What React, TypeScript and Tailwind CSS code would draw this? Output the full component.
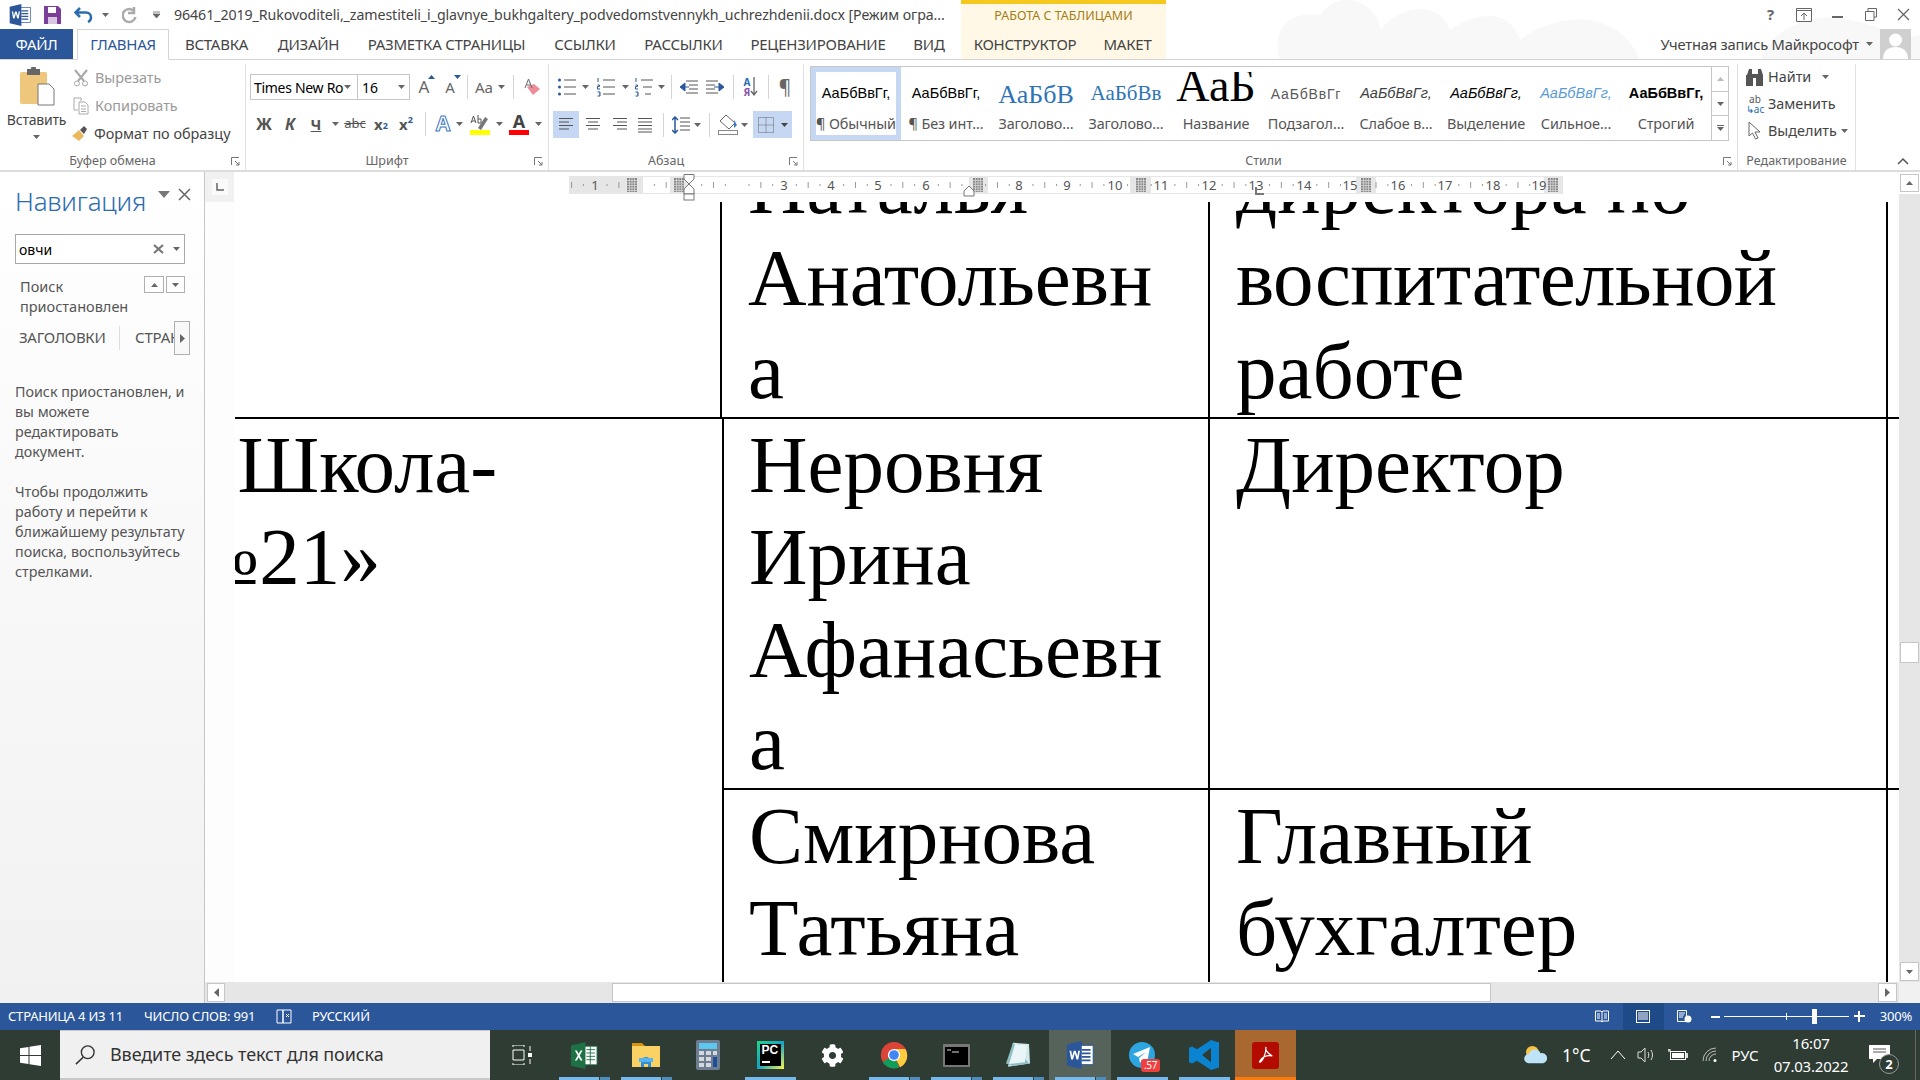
import React from "react";
import { FaCog } from "react-icons/fa";

const Caret = ({ c = "#666", up = false }: { c?: string; up?: boolean }) => (
  <svg width="7" height="4" viewBox="0 0 7 4" className="shrink-0"><path d={up ? "M3.5 0L7 4H0z" : "M0 0h7L3.5 4z"} fill={c} /></svg>
);
const Sep = () => <div className="w-px h-[24px] bg-[#d4d4d4]" />;
const S = ({ className = "", children }: { className?: string; children?: React.ReactNode }) => (
  <div className={"flex items-center justify-center shrink-0 h-full " + className}>{children}</div>
);

const Lines = ({ kind }: { kind: "l" | "c" | "r" | "j" }) => {
  const d = {
    l: "M1 1.5h14M1 5h10M1 8.5h14M1 12h10",
    c: "M1 1.5h14M3 5h10M1 8.5h14M3 12h10",
    r: "M1 1.5h14M5 5h10M1 8.5h14M5 12h10",
    j: "M1 1.5h14M1 5h14M1 8.5h14M1 12h14M1 15h14",
  }[kind];
  return <svg width="16" height="16" viewBox="0 0 16 16"><path d={d} stroke="#555" strokeWidth="1" fill="none" /></svg>;
};
const ListIcon = ({ n }: { n: "b" | "n" | "m" }) => (
  <svg width="20" height="20" viewBox="0 0 20 20">
    {n === "b" && <g fill="#2b579a"><circle cx="2.5" cy="3" r="1.5" /><circle cx="2.5" cy="10" r="1.5" /><circle cx="2.5" cy="17" r="1.5" /></g>}
    {n !== "b" && <path d="M2 1v4M1.5 8h2v1.5h-2V12h2.5M1.5 15h2.5v4H1.5M3 17h1" stroke="#2b579a" strokeWidth="1" fill="none" />}
    <path d={n === "m" ? "M7 3h12M9 10h9M11 17h6" : "M7 3h12M7 10h12M7 17h12"} stroke="#555" strokeWidth="1" />
  </svg>
);

const Word = ({ s = 22 }: { s?: number }) => (
  <svg width={s} height={s} viewBox="0 0 32 32">
    <rect x="12" y="5" width="19" height="22" fill="#fff" stroke="#2b579a" />
    <path d="M18 10h10M18 14h10M18 18h10M18 22h10" stroke="#2b579a" strokeWidth="2" />
    <path d="M1 4l17-4v32L1 28z" fill="#2b579a" />
    <path d="M4 11l2 10h2l2-7 2 7h2l2-10h-2l-1 6-2-6h-2l-2 6-1-6z" fill="#fff" />
  </svg>
);

const Styles: { label: string; prev: string; cls: string; sel?: boolean }[] = [
  { label: "¶ Обычный", prev: "АаБбВвГг,", cls: "font-['Liberation_Sans',sans-serif] text-[14.500px] text-black", sel: true },
  { label: "¶ Без инт...", prev: "АаБбВвГг,", cls: "font-['Liberation_Sans',sans-serif] text-[14.500px] text-black" },
  { label: "Заголово...", prev: "АаБбВ", cls: "font-['Liberation_Serif',serif] text-[26px] text-[#2e74b5]" },
  { label: "Заголово...", prev: "АаБбВв", cls: "font-['Liberation_Serif',serif] text-[21px] text-[#2e74b5]" },
  { label: "Название", prev: "АаБ", cls: "font-['Liberation_Serif',serif] text-[46px] text-black leading-[46px] -translate-y-[8px]" },
  { label: "Подзагол...", prev: "АаБбВвГг", cls: "font-['Liberation_Sans',sans-serif] text-[14px] tracking-[0.8px] text-[#5a5a5a]" },
  { label: "Слабое в...", prev: "АаБбВвГг,", cls: "font-['Liberation_Sans',sans-serif] italic text-[14.500px] text-[#404040]" },
  { label: "Выделение", prev: "АаБбВвГг,", cls: "font-['Liberation_Sans',sans-serif] italic text-[14.500px] text-black" },
  { label: "Сильное...", prev: "АаБбВвГг,", cls: "font-['Liberation_Sans',sans-serif] italic text-[14.500px] text-[#5b9bd5]" },
  { label: "Строгий", prev: "АаБбВвГг,", cls: "font-['Liberation_Sans',sans-serif] font-bold text-[14.500px] text-black" },
];

const GroupLabel = ({ children, launcher = true }: { children: React.ReactNode; launcher?: boolean }) => (
  <div className={"h-[20px] shrink-0 flex items-center justify-center relative text-[12.5px] text-[#666] translate-y-[1px] " + (launcher ? "pr-[20px]" : "")}>
    {children}
    {launcher && (
      <svg width="9" height="9" viewBox="0 0 9 9" className="absolute right-[5px] top-[6px]"><path d="M.5 8V.5H8M4 4l4 4M8 5v3H5" stroke="#777" fill="none" /></svg>
    )}
  </div>
);

function TitleBar() {
  return (
    <div className="h-[29px] flex shrink-0 relative z-10">
      <div className="w-[961px] flex items-center shrink-0">
        <S className="w-[38px] pl-[2px]"><Word s={22} /></S>
        <S className="w-[28px]">
          <svg width="17" height="19" viewBox="0 0 17 19"><path d="M0 1h14l3 3v15H0z" fill="#7b3f98" /><rect x="4" y="2" width="8" height="6" fill="#fff" /><rect x="4" y="12" width="9" height="7" fill="#d9c6e2" /></svg>
        </S>
        <S className="w-[36px]">
          <svg width="20" height="16" viewBox="0 0 20 16"><path d="M6 1L1.5 5.5 6 10M2 5.5h10a5 5 0 0 1 5 5c0 2-1 3.500-3 4.500" fill="none" stroke="#2b6cb0" strokeWidth="2.500" /></svg>
        </S>
        <Caret />
        <S className="w-[42px]">
          <svg width="17" height="19" viewBox="0 0 17 19"><path d="M12 2v6h-6M12 6a6.500 6.500 0 1 0 1.500 6" fill="none" stroke="#aaa" strokeWidth="2.500" /></svg>
        </S>
        <S className="w-[10px]"><svg width="7" height="7" viewBox="0 0 7 7"><path d="M0 1h7M0 3h7L3.500 7z" stroke="#666" strokeWidth=".8" fill="#666" /></svg></S>
        <div className="ml-[13px] text-[14.2px] text-[#444] whitespace-nowrap tracking-[-0.08px]">
          96461_2019_Rukovoditeli,_zamestiteli_i_glavnye_bukhgaltery_podvedomstvennykh_uchrezhdenii.docx [Режим огра...
        </div>
      </div>
      <div className="w-[205px] shrink-0 bg-[#fff8e6] border-t-[4px] border-[#f5c81f] flex items-center justify-center text-[12.5px] text-[#a67c14]">
        РАБОТА С ТАБЛИЦАМИ
      </div>
      <div className="flex-1 flex items-center justify-end text-[#666]">
        <S className="w-[33px] text-[15px] font-bold">?</S>
        <S className="w-[33px]">
          <svg width="16" height="14" viewBox="0 0 16 14"><path d="M.5.5h15v13H.5zM1 2.500h14M8 12V5M5 8l3-3 3 3" stroke="#666" fill="none" /></svg>
        </S>
        <S className="w-[34px]"><div className="w-[11px] h-[2px] bg-[#666] mt-[5px]" /></S>
        <S className="w-[33px]">
          <svg width="12" height="13" viewBox="0 0 12 13"><path d="M3 3V.5h8.500V9H9M.5 3.500H9V12.500H.5z" stroke="#666" fill="none" /></svg>
        </S>
        <S className="w-[33px]">
          <svg width="13" height="13" viewBox="0 0 13 13"><path d="M1 1l11 11M12 1L1 12" stroke="#666" strokeWidth="1.300" /></svg>
        </S>
      </div>
    </div>
  );
}

function TabRow() {
  const t = "flex items-center justify-center text-[15px] text-[#444] shrink-0 tracking-[-0.25px]";
  return (
    <div className="h-[31px] flex shrink-0 relative z-10 border-b border-[#d4d4d4]">
      <div className={"w-[73px] bg-[#2b579a] !text-white " + t}>ФАЙЛ</div>
      <div className={"ml-[4px] w-[92px] h-[31px] bg-white border border-[#d4d4d4] border-b-white !text-[#2b579a] " + t}>ГЛАВНАЯ</div>
      <div className={"w-[95px] " + t}>ВСТАВКА</div>
      <div className={"w-[89px] " + t}>ДИЗАЙН</div>
      <div className={"w-[187px] " + t}>РАЗМЕТКА СТРАНИЦЫ</div>
      <div className={"w-[90px] " + t}>ССЫЛКИ</div>
      <div className={"w-[107px] " + t}>РАССЫЛКИ</div>
      <div className={"w-[162px] " + t}>РЕЦЕНЗИРОВАНИЕ</div>
      <div className={"w-[60px] " + t}>ВИД</div>
      <div className="w-[205px] flex bg-[#fff8e6] shrink-0 ml-[2px]">
        <div className={"w-[128px] " + t}>КОНСТРУКТОР</div>
        <div className={"w-[77px] " + t}>МАКЕТ</div>
      </div>
      <div className="flex-1 flex items-center justify-end">
        <span className="text-[14.700px] text-[#444] whitespace-nowrap tracking-[-0.2px]">Учетная запись Майкрософт</span>
        <div className="mx-[7px]"><Caret /></div>
        <div className="w-[31px] h-[30px] bg-[#cfcfcf] mr-[9px] overflow-hidden flex justify-center">
          <svg width="31" height="30" viewBox="0 0 31 30"><circle cx="15.500" cy="11" r="6.500" fill="#fff" /><path d="M3 30c0-8 5-12 12.500-12S28 22 28 30z" fill="#fff" /></svg>
        </div>
      </div>
    </div>
  );
}

function Ribbon() {
  return (
    <div className="h-[112px] flex shrink-0 border-b-2 border-[#dcdcdc] bg-white relative z-10 text-[14.400px] text-[#444]">
      {/* Clipboard */}
      <div className="w-[246px] shrink-0 border-r border-[#e1e1e1] mt-[4px] flex flex-col">
        <div className="flex-1 flex min-h-0">
          <div className="w-[73px] flex flex-col items-center pt-[3px]">
            <svg width="36" height="39" viewBox="0 0 36 39">
              <rect x="1" y="5" width="27" height="32" rx="2" fill="#eec77d" />
              <rect x="8" y="2" width="13" height="6" fill="#666" /><rect x="12" y="0" width="5" height="4" rx="1" fill="#666" />
              <path d="M19 17h11l5 5v16H19z" fill="#fff" stroke="#777" />
            </svg>
            <div className="text-[14px] mt-[3px] tracking-[-0.2px]">Вставить</div>
            <div className="mt-[5px]"><Caret /></div>
          </div>
          <div className="flex flex-col">
            <div className="h-[28px] flex items-center gap-[6px] text-[#9a9a9a]">
              <svg width="16" height="18" viewBox="0 0 16 18"><path d="M2 1l9 11M14 1L5 12" stroke="#a8a8a8" strokeWidth="2" /><circle cx="4" cy="14.500" r="2.500" fill="none" stroke="#a8a8a8" /><circle cx="12" cy="14.500" r="2.500" fill="none" stroke="#a8a8a8" /></svg>
              Вырезать
            </div>
            <div className="h-[28px] flex items-center gap-[6px] text-[#9a9a9a]">
              <svg width="16" height="18" viewBox="0 0 16 18"><path d="M1 1h7v3M1 1v12h4M6 5h6l3 3v9H6zM8 9h5M8 12h5M8 14.500h5" fill="none" stroke="#aaa" /></svg>
              Копировать
            </div>
            <div className="h-[28px] flex items-center gap-[5px] -ml-[1px]">
              <svg width="17" height="16" viewBox="0 0 17 16"><path d="M0 10l7-6 5 6-5 5z" fill="#e9b860" /><path d="M8 4l4-4 3 3-3 5z" fill="#555" /></svg>
              Формат по образцу
            </div>
          </div>
        </div>
        <GroupLabel>Буфер обмена</GroupLabel>
      </div>

      {/* Font */}
      <div className="w-[303px] shrink-0 border-r border-[#e1e1e1] mt-[4px] flex flex-col">
        <div className="h-[34px] mt-[6px] flex items-center">
          <div className="w-[4px] shrink-0" />
          <div className="w-[108px] h-[26px] border border-[#c6c6c6] flex items-center pl-[3px] shrink-0 text-black overflow-hidden">
            <span className="w-[90px] overflow-hidden whitespace-nowrap text-[14px] tracking-[-0.3px]">Times New Roman</span>
            <Caret />
          </div>
          <div className="w-[52px] h-[26px] border border-l-0 border-[#c6c6c6] flex items-center justify-between px-[4px] shrink-0 text-black text-[14px]">16<Caret /></div>
          <S className="w-[28px] text-[17px] text-[#666] relative">A<span className="absolute right-[3px] top-[5px]"><Caret c="#2b579a" up /></span></S>
          <S className="w-[24px] text-[15px] text-[#666] relative">A<span className="absolute right-[1px] top-[5px]"><Caret c="#2b579a" /></span></S>
          <S className="w-[10px]"><Sep /></S>
          <S className="w-[24px] text-[15px] text-[#666]">Aa</S>
          <S className="w-[10px]"><Caret /></S>
          <S className="w-[14px]"><Sep /></S>
          <S className="w-[24px]">
            <svg width="17" height="18" viewBox="0 0 17 18"><path d="M3 9l7-3 6 5-7 6z" fill="#ee8c98" /><path d="M1 10L4.500 1 8 10M2.500 7h4" stroke="#666" fill="none" /></svg>
          </S>
        </div>
        <div className="h-[30px] mt-[5px] flex items-center text-[#555]">
          <S className="w-[5px]" />
          <S className="w-[26px] text-[16px] font-bold">Ж</S>
          <S className="w-[26px] text-[16px] font-bold italic">К</S>
          <S className="w-[26px] text-[15px] font-bold underline">Ч</S>
          <S className="w-[12px]"><Caret /></S>
          <S className="w-[28px] text-[13px] line-through">abc</S>
          <S className="w-[24px] text-[15px] font-bold">x<sub className="text-[9px] text-[#2b579a]">2</sub></S>
          <S className="w-[26px] text-[15px] font-bold">x<sup className="text-[9px] text-[#2b579a]">2</sup></S>
          <S className="w-[12px]"><Sep /></S>
          <S className="w-[24px] text-[21px] font-bold text-white [-webkit-text-stroke:1px_#3a78c3]">A</S>
          <S className="w-[8px]"><Caret /></S>
          <S className="w-[4px]" />
          <S className="w-[26px]">
            <svg width="20" height="21" viewBox="0 0 20 21"><path d="M1 9L3.500 2 6 9M2 7h3M8 1v8M8 5h3v4H8" stroke="#555" fill="none" /><path d="M8 14l7-11 3 2-7 11z" fill="#777" /><rect y="16" width="20" height="5" fill="#ff0" /></svg>
          </S>
          <S className="w-[12px]"><Caret /></S>
          <S className="w-[28px]">
            <div className="flex flex-col items-center leading-none"><span className="text-[18px] font-bold text-[#444] leading-[17px]">A</span><div className="w-[20px] h-[5px] bg-[#ff0000]" /></div>
          </S>
          <S className="w-[10px]"><Caret /></S>
        </div>
        <div className="flex-1" />
        <GroupLabel>Шрифт</GroupLabel>
      </div>

      {/* Paragraph */}
      <div className="w-[255px] shrink-0 border-r border-[#e1e1e1] mt-[4px] flex flex-col">
        <div className="h-[34px] mt-[6px] flex items-center">
          <S className="w-[6px]" />
          <S className="w-[24px]"><ListIcon n="b" /></S>
          <S className="w-[13px]"><Caret /></S>
          <S className="w-[27px]"><ListIcon n="n" /></S>
          <S className="w-[13px]"><Caret /></S>
          <S className="w-[24px]"><ListIcon n="m" /></S>
          <S className="w-[11px]"><Caret /></S>
          <S className="w-[8px]"><Sep /></S>
          <S className="w-[28px]">
            <svg width="18" height="14" viewBox="0 0 18 14"><path d="M6 1h12M9 5h9M9 9h9M6 13h12" stroke="#555" /><path d="M0 7l5-4v8zM4 7h5" fill="#2b579a" stroke="#2b579a" /></svg>
          </S>
          <S className="w-[24px]">
            <svg width="18" height="14" viewBox="0 0 18 14"><path d="M0 1h12M0 5h9M0 9h9M0 13h12" stroke="#555" /><path d="M18 7l-5-4v8zM14 7H8" fill="#2b579a" stroke="#2b579a" /></svg>
          </S>
          <S className="w-[12px]"><Sep /></S>
          <S className="w-[24px]">
            <div className="flex items-center">
              <div className="flex flex-col text-[10px] font-bold leading-[10px]"><span className="text-[#2b6cb0]">А</span><span className="text-[#8a4fa8]">Я</span></div>
              <svg width="8" height="20" viewBox="0 0 8 20"><path d="M4 0v18M1 14l3 4 3-4" stroke="#666" fill="none" strokeWidth="1.300" /></svg>
            </div>
          </S>
          <S className="w-[10px]"><Sep /></S>
          <S className="w-[24px] text-[19px] text-[#666]">¶</S>
        </div>
        <div className="h-[27px] mt-[7px] flex items-center">
          <S className="w-[4px]" />
          <S className="w-[26px] bg-[#c5d7f2]"><Lines kind="l" /></S>
          <S className="w-[27px]"><Lines kind="c" /></S>
          <S className="w-[27px]"><Lines kind="r" /></S>
          <S className="w-[24px]"><Lines kind="j" /></S>
          <S className="w-[12px]"><Sep /></S>
          <S className="w-[24px]">
            <svg width="18" height="18" viewBox="0 0 18 18"><path d="M8 2h10M8 6h10M8 10h10M8 14h10" stroke="#555" /><path d="M3 1v16M0 4l3-3 3 3M0 14l3 3 3-3" stroke="#2b579a" fill="none" strokeWidth="1.500" /></svg>
          </S>
          <S className="w-[9px]"><Caret /></S>
          <S className="w-[14px]"><Sep /></S>
          <S className="w-[23px]">
            <svg width="20" height="21" viewBox="0 0 20 21"><path d="M8 1l9 8-6 6-9-8z" fill="#fff" stroke="#666" /><path d="M16 6l3 5-3 3z" fill="#3a78c3" /><rect x="0.500" y="16.500" width="19" height="4" fill="#fff" stroke="#888" /></svg>
          </S>
          <S className="w-[10px]"><Caret /></S>
          <S className="w-[4px]" />
          <div className="w-[39px] h-full bg-[#c5d7f2] flex items-center justify-center gap-[7px] shrink-0">
            <svg width="16" height="16" viewBox="0 0 16 16"><path d="M.5.5h15v15H.5zM8 .5v15M.5 8h15" fill="none" stroke="#666" strokeDasharray="1 1" /></svg>
            <Caret c="#444" />
          </div>
        </div>
        <div className="flex-1" />
        <GroupLabel>Абзац</GroupLabel>
      </div>

      {/* Styles */}
      <div className="w-[934px] shrink-0 border-r border-[#e1e1e1] mt-[4px] flex flex-col pl-[6px]">
        <div className="w-[919px] h-[75px] mt-[2px] border border-[#c6c6c6] flex">
          {Styles.map((s, i) => (
            <div key={i} className={"w-[90px] shrink-0 flex flex-col items-center overflow-hidden " + (s.sel ? "border-[5px] border-[#c5d7f2] " : "border-[5px] border-transparent ")}>
              <div className="h-[40px] w-full flex items-center justify-center overflow-hidden whitespace-nowrap pt-[4px]">
                <span className={s.cls}>{s.prev}</span>
              </div>
              <div className="text-[14.400px] text-[#555] whitespace-nowrap tracking-[-0.1px] leading-[22px] mt-[1px]">{s.label}</div>
            </div>
          ))}
          <div className="flex-1 flex flex-col border-l border-[#c6c6c6] bg-white">
            <div className="flex-1 flex items-center justify-center border-b border-[#c6c6c6]"><Caret c="#bbb" up /></div>
            <div className="flex-1 flex items-center justify-center border-b border-[#c6c6c6]"><Caret /></div>
            <div className="flex-1 flex flex-col items-center justify-center gap-[1px]"><div className="w-[7px] h-px bg-[#666]" /><Caret /></div>
          </div>
        </div>
        <div className="flex-1" />
        <GroupLabel>Стили</GroupLabel>
      </div>

      {/* Editing */}
      <div className="w-[118px] shrink-0 border-r border-[#e1e1e1] mt-[4px] flex flex-col">
        <div className="pl-[7px]">
          <div className="h-[26px] flex items-center gap-[3px]">
            <svg width="20" height="20" viewBox="0 0 20 20"><path d="M2 8l2-6h3v5h6V2h3l2 6v11h-7V11H8v8H1V8z" fill="#555" /></svg>
            <span>Найти</span><span className="ml-[8px]"><Caret /></span>
          </div>
          <div className="h-[27px] flex items-center gap-[3px]">
            <div className="w-[20px] text-[10px] leading-[10px] text-center"><div className="text-[#555]">ab</div><div className="text-[#2b6cb0]">↳ac</div></div>
            <span>Заменить</span>
          </div>
          <div className="h-[27px] flex items-center gap-[3px]">
            <svg width="20" height="20" viewBox="0 0 20 20" className="shrink-0"><path d="M4 1v14l3.500-3 3 6 2.500-1-3-6h5z" fill="#fff" stroke="#666" /></svg>
            <span>Выделить</span><span className="ml-[1px]"><Caret /></span>
          </div>
        </div>
        <div className="flex-1" />
        <GroupLabel launcher={false}>Редактирование</GroupLabel>
      </div>
      <div className="flex-1 flex items-end justify-end pr-[11px] pb-[5px]">
        <svg width="12" height="8" viewBox="0 0 12 8"><path d="M1 7l5-5 5 5" stroke="#555" strokeWidth="1.500" fill="none" /></svg>
      </div>
    </div>
  );
}

function Sidebar() {
  return (
    <div className="w-[205px] shrink-0 border-r border-[#c6c6c6] bg-gradient-to-b from-white to-[#f1f1f1] text-[#555] text-[14.500px] flex flex-col">
      <div className="h-[62px] pl-[15px] flex items-center">
        <span className="text-[26px] text-[#2b6cb0] font-light tracking-[-0.2px] w-[140px] -mt-[4px]">Навигация</span>
        <span className="ml-[3px] -mt-[17px]"><svg width="12" height="7" viewBox="0 0 12 7"><path d="M0 0h12L6 7z" fill="#777" /></svg></span>
        <span className="ml-[8px] -mt-[17px]"><svg width="13" height="13" viewBox="0 0 13 13"><path d="M1 1l11 11M12 1L1 12" stroke="#666" strokeWidth="1.500" /></svg></span>
      </div>
      <div className="mx-[15px] h-[30px] w-[170px] border border-[#a8a8a8] bg-white flex items-center pl-[3px] pr-[4px] text-black text-[14px]">
        <span className="flex-1">овчи</span>
        <svg width="11" height="10" viewBox="0 0 11 10" className="mr-[9px]"><path d="M1 1l9 8M10 1L1 9" stroke="#777" strokeWidth="2.200" /></svg>
        <Caret />
      </div>
      <div className="flex pl-[20px] pt-[12px] h-[58px]">
        <div className="w-[124px] leading-[20px] text-[14.500px]">Поиск<br />приостановлен</div>
        <div className="w-[20px] h-[17px] border border-[#b0b0b0] flex items-center justify-center mr-[2px]"><Caret up /></div>
        <div className="w-[19px] h-[17px] border border-[#b0b0b0] flex items-center justify-center"><Caret /></div>
      </div>
      <div className="h-[34px] flex items-center -mt-[1px] pl-[19px] relative">
        <span className="text-[15px] tracking-[-0.3px] w-[100px] -mt-[2px]">ЗАГОЛОВКИ</span>
        <div className="w-px h-[24px] bg-[#ddd]" />
        <span className="text-[15px] tracking-[-0.2px] ml-[15px] w-[40px] overflow-hidden whitespace-nowrap -mt-[2px]">СТРАНИЦЫ</span>
        <div className="absolute left-[174px] top-0 w-[16px] h-[34px] border border-[#b0b0b0] bg-[#f8f8f8] flex items-center justify-center">
          <svg width="5" height="9" viewBox="0 0 5 9"><path d="M0 0l5 4.500L0 9z" fill="#666" /></svg>
        </div>
      </div>
      <div className="pl-[15px] pt-[27px] leading-[20px] text-[14.300px] w-[200px]">
        Поиск приостановлен, и<br />вы можете<br />редактировать<br />документ.
        <div className="h-[20px]" />
        Чтобы продолжить<br />работу и перейти к<br />ближайшему результату<br />поиска, воспользуйтесь<br />стрелками.
      </div>
    </div>
  );
}

const numbers: [number, string][] = [
  [595, "1"], [784, "3"], [831, "4"], [878, "5"], [926, "6"], [1019, "8"], [1067, "9"], [1115, "10"], [1161, "11"],
  [1209, "12"], [1256, "13"], [1304, "14"], [1350, "15"], [1398, "16"], [1445, "17"], [1493, "18"], [1539, "19"],
];
const Grid = ({ x }: { x: number }) => (
  <svg width="10" height="14" viewBox="0 0 10 14" className="absolute" style={{ left: x - 5, top: 6 }}>
    <rect width="10" height="14" fill="#8a8a8a" />
    <path d="M2.500 0v14M5 0v14M7.500 0v14M0 2.500h10M0 5h10M0 7.500h10M0 10h10M0 12.500h10" stroke="#ddd" strokeWidth=".7" />
  </svg>
);

function Ruler() {
  const seg = (w: string, gray: boolean) => <div className={w + " h-[18px] shrink-0 " + (gray ? "bg-[#e6e6e6]" : "bg-white border-y border-[#e6e6e6]")} />;
  return (
    <div className="h-[30px] shrink-0 flex relative bg-white">
      <div className="w-[29px] h-[30px] bg-[#f1f1f1] flex items-center justify-center shrink-0">
        <div className="w-[16px] h-[16px] bg-[#fafafa] flex items-center justify-center">
          <svg width="8" height="8" viewBox="0 0 8 8"><path d="M1 0v7h7" stroke="#666" strokeWidth="1.500" fill="none" /></svg>
        </div>
      </div>
      <div className="w-[335px] shrink-0" />
      <div className="flex mt-[4px]">
        {seg("w-[74px]", true)}{seg("w-[27px]", false)}{seg("w-[19px]", true)}{seg("w-[280px]", false)}{seg("w-[19px]", true)}
        {seg("w-[142px]", false)}{seg("w-[21px]", true)}{seg("w-[205px]", false)}{seg("w-[20px]", true)}{seg("w-[168px]", false)}{seg("w-[19px]", true)}
      </div>
      <svg width="994" height="18" viewBox="0 0 994 18" className="absolute left-[364px] top-[4px]">
        {Array.from({ length: 120 }).map((_, i) => {
          if (i % 4 === 0) return null;
          const x = 215 + (i - 36) * 11.83;
          if (x < 2 || x > 992) return null;
          return <rect key={i} x={x} y={i % 4 === 2 ? 6 : 8} width="1" height={i % 4 === 2 ? 6 : 2} fill="#999" />;
        })}
      </svg>
      {[632, 679, 978, 1141, 1366, 1553].map((x) => <Grid key={x} x={x - 205} />)}
      {numbers.map(([x, l]) => (
        <span key={x} className="absolute top-[5px] -translate-x-1/2 text-[13px] leading-[16px] text-[#555]" style={{ left: x - 205 }}>{l}</span>
      ))}
      <svg width="14" height="30" viewBox="0 0 14 30" className="absolute left-[477px] top-[2px]">
        <path d="M2 .5h10V5L7 10 2 5z M2 20v-5l5-5 5 5v5z" fill="#fff" stroke="#777" /><rect x="2" y="20" width="10" height="6" fill="#fff" stroke="#777" />
      </svg>
      <svg width="14" height="12" viewBox="0 0 14 12" className="absolute left-[757px] top-[13px]"><path d="M2 11V6l5-5 5 5v5z" fill="#fff" stroke="#777" /></svg>
      <svg width="10" height="9" viewBox="0 0 10 9" className="absolute left-[1049px] top-[15px]"><path d="M2 0v7h8" stroke="#777" strokeWidth="2" fill="none" /></svg>
      <div className="flex-1" />
    </div>
  );
}

function Document() {
  const serif = "font-['Liberation_Serif',serif] text-[81px] leading-[92.300px] text-black whitespace-nowrap";
  return (
    <div className="flex-1 flex min-h-0">
      <div className="w-[30px] shrink-0 bg-[#fdfdfd]" />
      <div className="flex-1 overflow-hidden min-w-0">
        <div className={"-mt-[62px] w-[1664px] " + serif}>
          <div className="flex border-b-2 border-black h-[279px]">
            <div className="w-[487px] shrink-0 border-r-2 border-black" />
            <div className="w-[488px] shrink-0 border-r-2 border-black pl-[26px]">Наталья<br />Анатольевн<br />а</div>
            <div className="w-[678px] shrink-0 border-r-2 border-black pl-[26px]">директора по<br /><span className="tracking-[-0.6px]">воспитательной</span><br />работе</div>
          </div>
          <div className="flex">
            <div className="w-[489px] shrink-0 border-r-2 border-black overflow-hidden">
              <div className="-ml-[38px]">«Школа-</div>
              <div className="-ml-[53px]">№21»</div>
            </div>
            <div className="flex-1 flex flex-col">
              <div className="flex border-b-2 border-black h-[371px]">
                <div className="w-[486px] shrink-0 border-r-2 border-black pl-[25px]">Неровня<br />Ирина<br />Афанасьевн<br />а</div>
                <div className="w-[678px] shrink-0 border-r-2 border-black pl-[26px]">Директор</div>
              </div>
              <div className="flex h-[200px]">
                <div className="w-[486px] shrink-0 border-r-2 border-black pl-[25px]">Смирнова<br />Татьяна</div>
                <div className="w-[678px] shrink-0 border-r-2 border-black pl-[26px]">Главный<br />бухгалтер</div>
              </div>
            </div>
          </div>
        </div>
      </div>
    </div>
  );
}

function HScroll() {
  return (
    <div className="h-[21px] shrink-0 flex bg-[#e6e6e6] items-center">
      <div className="w-[2px]" />
      <div className="w-[18px] h-[19px] bg-white border border-[#c6c6c6] flex items-center justify-center shrink-0"><svg width="5" height="9" viewBox="0 0 5 9"><path d="M5 0L0 4.500 5 9z" fill="#666" /></svg></div>
      <div className="w-[387px] shrink-0" />
      <div className="w-[879px] h-[19px] bg-white border border-[#c6c6c6] shrink-0" />
      <div className="w-[387px] shrink-0" />
      <div className="w-[19px] h-[19px] bg-white border border-[#c6c6c6] flex items-center justify-center shrink-0"><svg width="5" height="9" viewBox="0 0 5 9"><path d="M0 0l5 4.500L0 9z" fill="#666" /></svg></div>
      <div className="w-[2px]" />
      <div className="flex-1 h-full bg-[#f1f1f1]" />
    </div>
  );
}

function VScroll() {
  return (
    <div className="w-[21px] shrink-0 flex flex-col bg-[#e6e6e6]">
      <div className="h-[22px] bg-white flex items-start shrink-0">
        <div className="mt-[2px] ml-[1px] w-[19px] h-[18px] bg-white border border-[#c6c6c6] flex items-center justify-center"><Caret up /></div>
      </div>
      <div className="h-[448px] shrink-0" />
      <div className="ml-[1px] w-[19px] h-[21px] bg-white border border-[#c6c6c6] shrink-0" />
      <div className="flex-1" />
      <div className="ml-[1px] mb-[1px] w-[19px] h-[19px] bg-white border border-[#c6c6c6] flex items-center justify-center shrink-0"><Caret /></div>
    </div>
  );
}

function StatusBar() {
  return (
    <div className="h-[27px] shrink-0 bg-[#2b579a] flex items-center text-white text-[13px] tracking-[-0.2px]">
      <span className="ml-[8px] w-[136px]">СТРАНИЦА 4 ИЗ 11</span>
      <span className="w-[132px]">ЧИСЛО СЛОВ: 991</span>
      <svg width="16" height="16" viewBox="0 0 16 16" className="shrink-0"><path d="M1 1h6v13H1zM7 1h8v13H7z" fill="none" stroke="#fff" /><path d="M10 5l3 3M13 5l-3 3" stroke="#fff" /></svg>
      <span className="ml-[20px]">РУССКИЙ</span>
      <div className="flex-1" />
      <svg width="14" height="13" viewBox="0 0 14 13"><path d="M.5 1h5.500l1 1 1-1h5.500v10H8l-1 1-1-1H.5zM7 2v10M2 4h3M2 6h3M2 8h3M9 4h3M9 6h3M9 8h3" stroke="#fff" fill="none" /></svg>
      <div className="w-[41px] h-[27px] ml-[14px] bg-[#1e4a87] flex items-center justify-center">
        <svg width="14" height="13" viewBox="0 0 14 13"><rect x=".5" y=".5" width="13" height="12" fill="none" stroke="#fff" /><path d="M2 3h10M2 5h10M2 7h10M2 9h10" stroke="#fff" /></svg>
      </div>
      <svg width="15" height="13" viewBox="0 0 15 13" className="ml-[13px]"><path d="M.5.5h9v11H.5zM2 3h6M2 5h5M2 7h4" stroke="#fff" fill="none" /><circle cx="11" cy="9" r="3.500" fill="#fff" /></svg>
      <div className="w-[9px] h-[2px] bg-white ml-[19px]" />
      <div className="w-[125px] h-px bg-white ml-[4px] relative">
        <div className="absolute left-[62px] -top-[3px] w-px h-[7px] bg-white" />
        <div className="absolute left-[88px] -top-[7px] w-[5px] h-[15px] bg-white" />
      </div>
      <span className="ml-[5px] w-[11px] h-[11px] relative">
        <span className="absolute left-0 top-[4px] w-[11px] h-[2px] bg-white" /><span className="absolute left-[4.500px] top-0 w-[2px] h-[11px] bg-white" />
      </span>
      <span className="ml-[15px] mr-[8px] text-[13px]">300%</span>
    </div>
  );
}

const Bar = ({ split = false }: { split?: boolean }) => (
  <div className="absolute bottom-0 left-[6px] right-[5px] h-[3px] flex bg-[#76b9ed]">
    <div className="flex-1" />
    {split && <div className="w-[11px] bg-[#4f8cbb] border-l border-[#2e3c34]" />}
  </div>
);

const Slot = ({ children, bar, split, cls = "" }: { children: React.ReactNode; bar?: boolean; split?: boolean; cls?: string }) => (
  <div className={"w-[62px] h-[50px] relative flex items-center justify-center shrink-0 " + cls}>
    {children}
    {bar && <Bar split={split} />}
  </div>
);

function Taskbar() {
  return (
    <div className="h-[50px] shrink-0 bg-[#2e3c34] flex items-center text-white">
      <div className="w-[60px] flex justify-center shrink-0">
        <svg width="21" height="21" viewBox="0 0 21 21" fill="#fff"><path d="M0 3.200l8.500-1.200v8H0zM9.500 1.800L21 0v10H9.500zM0 11h8.500v8L0 17.800zM9.500 11H21v10L9.500 19.200z" /></svg>
      </div>
      <div className="w-[430px] h-[50px] bg-[#f0f0f0] border-t border-b-2 border-[#c8c8c8] flex items-center shrink-0 text-[#333]">
        <svg width="20" height="20" viewBox="0 0 22 22" className="ml-[15px]"><circle cx="14" cy="8" r="7" fill="none" stroke="#333" strokeWidth="1.500" /><path d="M9 13.500L1 21" stroke="#333" strokeWidth="1.700" /></svg>
        <span className="ml-[15px] text-[18px] tracking-[-0.1px]">Введите здесь текст для поиска</span>
      </div>
      <div className="w-[63px] flex justify-center shrink-0">
        <svg width="20" height="20" viewBox="0 0 20 20"><path d="M1 0h11M1 5h11v10H1zM1 20h11M1 0v2M12 0v2M1 18v2M12 18v2M18 1v5M18 14v5" stroke="#fff" strokeWidth="1" fill="none" /><rect x="16" y="8" width="4" height="4" fill="#fff" /></svg>
      </div>
      <Slot bar split>
        <svg width="27" height="27" viewBox="0 0 28 32" preserveAspectRatio="none"><rect x="10" y="5" width="17" height="22" fill="#fff" stroke="#1e7145" /><path d="M16 9h9M16 13h9M16 17h9M16 21h9M20 5v22" stroke="#1e7145" /><path d="M0 4L15 0v32L0 28z" fill="#1e7145" /><path d="M4 10l3 6-3 6h2l2-4 2 4h2l-3-6 3-6h-2l-2 4-2-4z" fill="#fff" /></svg>
      </Slot>
      <Slot bar split>
        <svg width="28" height="24" viewBox="0 0 28 24"><path d="M0 0h10l3 3H0z" fill="#d9920d" /><path d="M0 3h28v21H0z" fill="#fad165" /><path d="M9 19a5 5 0 0 1 10 0v5h-3v-3h-4v3H9z" fill="#2f8fd6" /><rect x="7" y="15" width="14" height="4" fill="#5cb4ee" /></svg>
      </Slot>
      <Slot>
        <svg width="24" height="30" viewBox="0 0 24 30"><rect width="24" height="30" rx="2" fill="#6e7d8f" /><rect x="3" y="3" width="18" height="6" fill="#5cc8f0" /><g fill="#d4d9df"><rect x="3" y="11" width="5" height="4" /><rect x="10" y="11" width="5" height="4" /><rect x="17" y="11" width="4" height="4" /><rect x="3" y="17" width="5" height="4" /><rect x="10" y="17" width="5" height="4" /><rect x="3" y="23" width="5" height="4" /><rect x="10" y="23" width="5" height="4" /></g><rect x="17" y="17" width="4" height="10" fill="#1f4e9a" /></svg>
      </Slot>
      <Slot bar>
        <div className="w-[27px] h-[28px] bg-[linear-gradient(135deg,#21d789_0%,#13a4c4_50%,#fcf84a_100%)] p-[3px] flex">
          <div className="flex-1 bg-black text-white text-[12px] font-bold leading-[13px] pl-[2px] flex flex-col justify-between pb-[3px] font-['Liberation_Sans',sans-serif]">
            PC<div className="w-[8px] h-[2px] bg-white" />
          </div>
        </div>
      </Slot>
      <Slot><FaCog size={23} color="#fff" /></Slot>
      <Slot bar split>
        <svg width="28" height="28" viewBox="0 0 32 32"><circle cx="16" cy="16" r="15" fill="#db4437" /><path d="M16 16L3 24A15 15 0 0 0 22 30z" fill="#0f9d58" /><path d="M16 16l7 14A15 15 0 0 0 29 9H16z" fill="#ffcd40" /><circle cx="16" cy="16" r="7" fill="#fff" /><circle cx="16" cy="16" r="5.500" fill="#4285f4" /></svg>
      </Slot>
      <Slot bar split>
        <svg width="27" height="23" viewBox="0 0 27 23"><rect width="27" height="23" rx="1" fill="#777" /><rect x="2" y="3" width="23" height="18" fill="#000" /><path d="M4 6h4M9 8h7" stroke="#ddd" strokeWidth="1" /></svg>
      </Slot>
      <Slot bar split>
        <svg width="26" height="26" viewBox="0 0 26 40" preserveAspectRatio="none"><path d="M8 1l16 2 1 30-22 5z" fill="#cfe8ec" /><path d="M8 1L1 33l7 4 16-4z" fill="#8fbfc4" /><path d="M10 4l12 1-2 26-16 3z" fill="#e9f5f6" /></svg>
      </Slot>
      <Slot bar split cls="bg-[#55635b]">
        <Word s={28} />
      </Slot>
      <Slot bar>
        <svg width="26" height="26" viewBox="0 0 26 26"><circle cx="13" cy="13" r="13" fill="#2ca5e0" /><path d="M4 12l17-7-3 16-5-3-2 3-1-5 7-6-8 5z" fill="#fff" /></svg>
        <div className="absolute left-[30px] top-[29px] w-[19px] h-[13px] bg-[#ef3f3f] rounded-[3px] text-[10px] leading-[13px] text-center text-white tracking-[-0.3px]">.57</div>
      </Slot>
      <Slot bar>
        <svg width="30" height="30" viewBox="0 0 30 46" preserveAspectRatio="none"><path d="M22 0l8 4v38l-8 4-14-14-5 4-3-2V12l3-2 5 4zM22 12l-9 11 9 11z" fill="#0a84d0" /></svg>
      </Slot>
      <div className="w-[61px] h-[50px] bg-[#a8682f] relative flex items-center justify-center shrink-0">
        <div className="w-[27px] h-[27px] bg-[#b30b00] rounded-[3px] flex items-center justify-center">
          <svg width="18" height="18" viewBox="0 0 18 20"><path d="M9 1c-1 3 0 6 7 10-6-1-11 1-14 6-1 2 2 1 4-3 2-4 3-9 3-13z" fill="none" stroke="#fff" strokeWidth="1.300" /></svg>
        </div>
        <div className="absolute bottom-0 left-0 right-0 h-[3px] bg-[#f97a0e]" />
      </div>
      <div className="w-[227px] shrink-0" />
      <svg width="26" height="20" viewBox="0 0 26 22" className="shrink-0"><circle cx="9" cy="8" r="7" fill="#f6c343" /><path d="M5 20a5 5 0 0 1 0-10 7 7 0 0 1 13-1 5.500 5.500 0 0 1 3 11z" fill="#bfe3f7" /></svg>
      <span className="ml-[13px] text-[17.500px] w-[40px] shrink-0">1°C</span>
      <svg width="16" height="10" viewBox="0 0 16 10" className="ml-[8px] shrink-0"><path d="M1 9l7-8 7 8" stroke="#fff" fill="none" /></svg>
      <svg width="20" height="16" viewBox="0 0 20 16" className="ml-[11px] shrink-0"><path d="M1 5h3l4-4v14l-4-4H1zM11 5c1 2 1 4 0 6M14 3c2 3 2 7 0 10" stroke="#ddd" fill="none" /></svg>
      <svg width="20" height="12" viewBox="0 0 20 12" className="ml-[11px] shrink-0"><rect x="2.500" y="2.500" width="15" height="8" fill="#2e3c34" stroke="#fff" /><rect x="4" y="4" width="12" height="5" fill="#fff" /><rect x="18" y="4" width="2" height="5" fill="#ddd" /><path d="M0 1h3M1 0v3" stroke="#fff" /></svg>
      <svg width="16" height="16" viewBox="0 0 16 16" className="ml-[14px] shrink-0"><path d="M1 14A13 13 0 0 1 14 1M4 14A10 10 0 0 1 14 4M7 14a7 7 0 0 1 7-7" stroke="#bbb" fill="none" /><circle cx="13" cy="13.500" r="1.500" fill="#fff" /></svg>
      <span className="ml-[12px] text-[15px] w-[30px] text-center shrink-0">РУС</span>
      <div className="ml-[13px] w-[76px] flex flex-col items-center text-[15px] leading-[23px] shrink-0 tracking-[-0.2px]">
        <span>16:07</span><span>07.03.2022</span>
      </div>
      <div className="ml-[20px] w-[34px] h-[50px] relative shrink-0">
        <svg width="21" height="18" viewBox="0 0 21 18" className="absolute left-[0px] top-[15px]"><path d="M0 0h21v14H8l-4 4v-4H0z" fill="#fff" /><path d="M4 4h13M4 7h13" stroke="#555" /></svg>
        <div className="absolute left-[10px] top-[24px] w-[20px] h-[20px] rounded-full border border-[#999] bg-[#2e3c34] text-[13px] leading-[18px] text-center font-bold">2</div>
      </div>
      <div className="w-px h-[50px] bg-[#666] ml-[12px] shrink-0" />
    </div>
  );
}

export default function App() {
  return (
    <div className="w-[1920px] h-[1080px] overflow-hidden flex flex-col bg-white font-['Noto_Sans',sans-serif] relative">
      <svg width="680" height="60" viewBox="0 0 680 60" className="absolute right-0 top-0" aria-hidden="true">
        <g fill="#f8f8f8">
          <path d="M40 60c-10-30 10-50 40-45 20-30 60-10 60 15 20-25 60-30 70 0 30-20 60-20 70 10 40-30 100-30 120 20z" />
          <path d="M520 60c10-30 50-50 90-40 30 5 50 20 70 15v25z" />
        </g>
      </svg>
      <TitleBar />
      <TabRow />
      <Ribbon />
      <div className="h-[831px] flex shrink-0">
        <Sidebar />
        <div className="flex-1 flex flex-col min-w-0">
          <div className="flex-1 flex min-h-0">
            <div className="flex-1 flex flex-col min-w-0"><Ruler /><Document /></div>
            <VScroll />
          </div>
          <HScroll />
        </div>
      </div>
      <StatusBar />
      <Taskbar />
    </div>
  );
}
